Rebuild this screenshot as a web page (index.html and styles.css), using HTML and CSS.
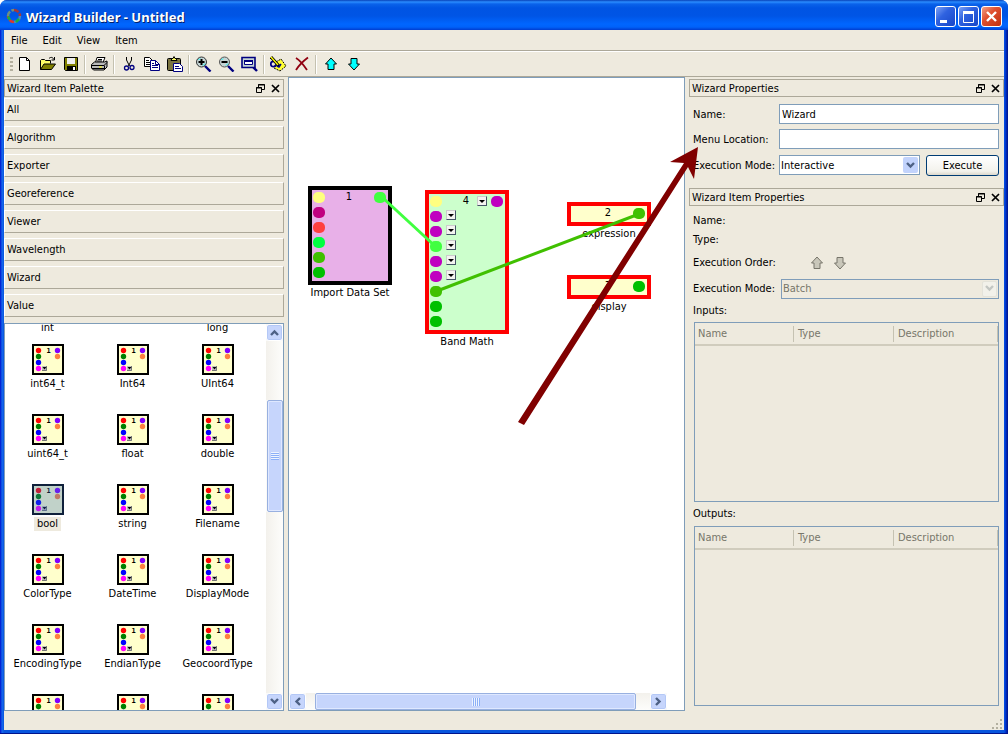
FILE: index.html
```html
<!DOCTYPE html>
<html lang="en">
<head>
<meta charset="utf-8">
<title>Wizard Builder - Untitled</title>
<link rel="stylesheet" href="styles.css">
</head>
<body>
<svg class="defs" aria-hidden="true">
  <symbol id="item" viewBox="0 0 32 31">
    <rect width="32" height="31" fill="#000"/><rect x="2" y="2" width="28" height="27" fill="#ffffcc"/>
    <circle cx="6.500" cy="6.500" r="2.700" fill="#f00"/><circle cx="6.500" cy="12.500" r="2.700" fill="#008000"/>
    <circle cx="6.500" cy="18.500" r="2.700" fill="#00f"/><circle cx="6.500" cy="24.500" r="2.700" fill="#f0f"/>
    <circle cx="25.500" cy="6.500" r="2.700" fill="#8000ff"/><circle cx="25.500" cy="12.500" r="2.700" fill="#ff8040"/>
    <rect x="10" y="22" width="5" height="5" fill="#c0c0c0"/><path d="M10 26.500h4.500V22" fill="none" stroke="#777"/><path d="M10.500 23h4l-2 2.500z"/>
    <text x="16.500" y="9" class="item-number">1</text>
  </symbol>
  <symbol id="up" viewBox="0 0 16 16"><path d="M8 2 13.500 8H11v5.500H5V8H2.500z" stroke-width="1"/></symbol>
  <symbol id="down" viewBox="0 0 16 16"><path d="M8 14 13.500 8H11V2.500H5V8H2.500z" stroke-width="1"/></symbol>
  <symbol id="float" viewBox="0 0 9 9"><path d="M2.500 3V.5h6v5H6M2 1h7M.5 3.500h5v5h-5zM0 4h6" fill="none" stroke="#000"/></symbol>
  <symbol id="close" viewBox="0 0 9 9"><path d="m1 1 7 7M8 1 1 8" fill="none" stroke="#000" stroke-width="1.700"/></symbol>
  <symbol id="chev-down" viewBox="0 0 9 7"><path d="m1 1 3.500 3.500L8 1" fill="none" stroke="currentColor" stroke-width="2.400"/></symbol>
</svg>
<div class="window">
  <header class="titlebar">
    <svg class="app-icon" width="16" height="16" viewBox="0 0 16 16" fill="none" stroke-width="2.500" stroke-dasharray="5 1.500">
      <path d="M8 2a6 6 0 0 1 6 6" stroke="#a83838"/><path d="M14 8a6 6 0 0 1-6 6" stroke="#4a88b8"/><path d="M8 14a6 6 0 0 1-6-6" stroke="#d83a30"/><path d="M2 8a6 6 0 0 1 6-6" stroke="#6d9080"/><path d="M2 8.500 4 12M10 14l3-3" stroke="#18b040"/>
    </svg>
    <h1 class="title">Wizard Builder - Untitled</h1>
    <button class="caption-button" aria-label="Minimize"><svg width="19" height="19"><path d="M4 13h7v3H4z" fill="#fff"/></svg></button>
    <button class="caption-button" aria-label="Maximize"><svg width="19" height="19"><path d="M4.500 5v10.500h10V5" fill="none" stroke="#fff"/><path d="M4 4h11v3H4z" fill="#fff"/></svg></button>
    <button class="caption-button caption-close" aria-label="Close"><svg width="19" height="19"><path d="m5 5 9 9m0-9-9 9" stroke="#fff" stroke-width="2.400"/></svg></button>
  </header>
  <nav class="menubar">
    <button class="menu">File</button><button class="menu">Edit</button><button class="menu">View</button><button class="menu">Item</button>
  </nav>
  <div class="toolbar" role="toolbar">
    <span class="grip"></span>
    <button class="tool" aria-label="New"><svg width="16" height="16"><path d="M2.500 1.500h7l3 3v10h-10z" fill="#fff" stroke="#000"/><path d="M9.500 1.500v3h3" fill="none" stroke="#000"/></svg></button>
    <button class="tool" aria-label="Open"><svg width="16" height="16"><path d="M.5 13.500v-9l1-1h3l1 1h5v3" fill="#ff6" stroke="#000"/><path d="m.5 13.500 3.500-5.500h11.500l-4 5.500z" fill="#808000" stroke="#000"/><path d="M9 2.500c2-2 4-1 5 1M14.500 1v3h-3" fill="none" stroke="#000"/></svg></button>
    <button class="tool" aria-label="Save"><svg width="16" height="16"><path d="M1.500 1.500h13v13h-12l-1-1z" fill="#808000" stroke="#000"/><path d="M4 2h8v6H4z" fill="#eee"/><path d="M4 10h9v5H4z"/><path d="M10 11h2v3h-2z" fill="#fff"/></svg></button>
    <span class="separator"></span>
    <button class="tool" aria-label="Print"><svg width="17" height="16"><path d="M4.500 6.500l1.500-5h8l-2 5" fill="#fff" stroke="#000"/><path d="M.5 8.500l3-2.500h10l2.500-1v6l-3 3H2.500l-2-2z" fill="#bbb" stroke="#000"/><path d="M1 9.500h12l3-3M1 12.500h12M13.500 14V9.500M7 3.500h4M6 5h5" fill="none" stroke="#000"/><path d="M8 11h3" stroke="#ff0"/></svg></button>
    <span class="separator"></span>
    <button class="tool" aria-label="Cut"><svg width="16" height="16" fill="none"><path d="M5.500 1v3l3 6M10.500 1v3l-3 6" stroke="#000"/><circle cx="5.500" cy="12" r="2" stroke="#000080" stroke-width="1.300"/><circle cx="11" cy="11.500" r="2" stroke="#000080" stroke-width="1.300"/></svg></button>
    <button class="tool" aria-label="Copy"><svg width="16" height="16"><path d="M.5 1.500h5l3 3v6h-8z" fill="#fff" stroke="#000"/><path d="M2 4.500h3M2 6.500h5M2 8.500h5" stroke="#000"/><path d="M6.500 4.500h5l4 4v6h-9z" fill="#fff" stroke="#000080"/><path d="M11.500 4.500v4h4M8 7.500h2M8 9.500h6M8 11.500h6" fill="none" stroke="#000080"/></svg></button>
    <button class="tool" aria-label="Paste"><svg width="16" height="16"><rect x=".5" y="2.500" width="13" height="12" rx="1" fill="#7b7440" stroke="#000"/><path d="M4 4.500h6l-1-2H8l-1-2-1 2H5z" fill="#ff6" stroke="#000"/><path d="M6.500 7.500h6l3 3v5h-9z" fill="#fff" stroke="#000080"/><path d="M8 10.500h4M8 12.500h6" stroke="#000080"/></svg></button>
    <span class="separator"></span>
    <button class="tool" aria-label="Zoom in"><svg width="17" height="16"><path d="m10 10 5.500 5.500" stroke="#000080" stroke-width="2.400"/><circle cx="6.500" cy="6" r="5" fill="#c5d4d4" stroke="#333"/><path d="M3.500 4 5 2.500M8 9.500l2-2" stroke="#0ff"/><path d="M3.500 6h6m-3-3v6" stroke="#000" stroke-width="2"/></svg></button>
    <button class="tool" aria-label="Zoom out"><svg width="17" height="16"><path d="m10 10 5.500 5.500" stroke="#000080" stroke-width="2.400"/><circle cx="6.500" cy="6" r="5" fill="#c5d4d4" stroke="#555"/><path d="M3.500 4 5 2.500M8 9.500l2-2" stroke="#0ff"/><path d="M3.500 6h6" stroke="#000" stroke-width="2"/></svg></button>
    <button class="tool" aria-label="Zoom to fit"><svg width="17" height="16"><path d="m11 10 5 5" stroke="#000080" stroke-width="2.400"/><path d="M1 1.500h13v10H1z" fill="#c5d4d4" stroke="#000080" stroke-width="1.600"/><path d="M3.500 4.500h8v4h-8z" fill="#fff" stroke="#000080"/><path d="M3 4h9v2H3z" fill="#000080"/></svg></button>
    <span class="separator"></span>
    <button class="tool" aria-label="Edit item"><svg width="17" height="16"><path d="m6 6 5-3 5 7-6 5-6-3z" fill="#ff3" stroke="#000" stroke-dasharray="2 1"/><circle cx="3.500" cy="8" r="2.700" fill="none" stroke="#000080" stroke-width="1.700"/><path d="m1 1 8 9" stroke="#000" stroke-width="3"/><path d="m1 1 7 8" stroke="#ff0" stroke-width="1.300"/><path d="m7 10 2 1 2-3" fill="none" stroke="#000080" stroke-width="1.500"/></svg></button>
    <button class="tool" aria-label="Delete"><svg width="16" height="16"><path d="M2 2c5 3 7 6 11 12M14 1.500C8 6 5 9 2 14" fill="none" stroke="#900010" stroke-width="1.800"/></svg></button>
    <span class="separator"></span>
    <button class="tool tool-arrow" aria-label="Move up"><svg width="16" height="16"><use href="#up"/></svg></button>
    <button class="tool tool-arrow" aria-label="Move down"><svg width="16" height="16"><use href="#down"/></svg></button>
  </div>

  <main class="workspace">
    <section class="palette">
      <div class="dock-title"><h2 class="dock-name">Wizard Item Palette</h2><button class="dock-button" aria-label="Float palette"><svg width="9" height="9"><use href="#float"/></svg></button><button class="dock-button" aria-label="Close palette"><svg width="9" height="9"><use href="#close"/></svg></button></div>
      <div class="categories">
        <button class="category">All</button><button class="category">Algorithm</button><button class="category">Exporter</button><button class="category">Georeference</button><button class="category">Viewer</button><button class="category">Wavelength</button><button class="category">Wizard</button><button class="category">Value</button>
      </div>
      <div class="item-list">
        <div class="item-view">
          <div class="items">
            <div class="item second-line"><svg width="32" height="31"><use href="#item"/></svg><span class="item-label">int</span></div>
            <div class="item"></div>
            <div class="item second-line"><svg width="32" height="31"><use href="#item"/></svg><span class="item-label">long</span></div>
            <div class="item"><svg width="32" height="31"><use href="#item"/></svg><span class="item-label">int64_t</span></div>
            <div class="item"><svg width="32" height="31"><use href="#item"/></svg><span class="item-label">Int64</span></div>
            <div class="item"><svg width="32" height="31"><use href="#item"/></svg><span class="item-label">UInt64</span></div>
            <div class="item"><svg width="32" height="31"><use href="#item"/></svg><span class="item-label">uint64_t</span></div>
            <div class="item"><svg width="32" height="31"><use href="#item"/></svg><span class="item-label">float</span></div>
            <div class="item"><svg width="32" height="31"><use href="#item"/></svg><span class="item-label">double</span></div>
            <div class="item selected"><span class="tint"><svg width="32" height="31"><use href="#item"/></svg></span><span class="item-label">bool</span></div>
            <div class="item"><svg width="32" height="31"><use href="#item"/></svg><span class="item-label">string</span></div>
            <div class="item"><svg width="32" height="31"><use href="#item"/></svg><span class="item-label">Filename</span></div>
            <div class="item"><svg width="32" height="31"><use href="#item"/></svg><span class="item-label">ColorType</span></div>
            <div class="item"><svg width="32" height="31"><use href="#item"/></svg><span class="item-label">DateTime</span></div>
            <div class="item"><svg width="32" height="31"><use href="#item"/></svg><span class="item-label">DisplayMode</span></div>
            <div class="item"><svg width="32" height="31"><use href="#item"/></svg><span class="item-label">EncodingType</span></div>
            <div class="item"><svg width="32" height="31"><use href="#item"/></svg><span class="item-label">EndianType</span></div>
            <div class="item"><svg width="32" height="31"><use href="#item"/></svg><span class="item-label">GeocoordType</span></div>
            <div class="item"><svg width="32" height="31"><use href="#item"/></svg></div>
            <div class="item"><svg width="32" height="31"><use href="#item"/></svg></div>
            <div class="item"><svg width="32" height="31"><use href="#item"/></svg></div>
          </div>
        </div>
        <div class="scrollbar vertical">
          <button class="scroll-button" aria-label="Scroll up"><svg class="flip" width="9" height="7"><use href="#chev-down"/></svg></button>
          <div class="track track-before"></div>
          <div class="thumb"><span class="ridges"></span></div>
          <div class="track track-after"></div>
          <button class="scroll-button" aria-label="Scroll down"><svg width="9" height="7"><use href="#chev-down"/></svg></button>
        </div>
      </div>
    </section>

    <section class="canvas">
      <div class="canvas-view">
        <div class="node import"><span class="node-number">1</span>
          <div class="ports"><i class="port c-yellow"></i><i class="port c-plum"></i><i class="port c-red"></i><i class="port c-mint"></i><i class="port c-olive"></i><i class="port c-green"></i></div>
          <div class="ports"><i class="port c-lime"></i></div>
          <span class="node-label">Import Data Set</span>
        </div>
        <div class="node band"><span class="node-number">4</span>
          <div class="ports"><i class="port c-yellow"></i><i class="port c-purple"></i><i class="port c-purple"></i><i class="port c-lime"></i><i class="port c-purple"></i><i class="port c-purple"></i><i class="port c-olive"></i><i class="port c-green"></i><i class="port c-green"></i></div>
          <div class="drops"><button class="drop" aria-label="Input 2"></button><button class="drop" aria-label="Input 3"></button><button class="drop" aria-label="Input 4"></button><button class="drop" aria-label="Input 5"></button><button class="drop" aria-label="Input 6"></button></div>
          <div class="outputs"><button class="drop" aria-label="Output 1"></button><i class="port c-purple"></i></div>
          <span class="node-label">Band Math</span>
        </div>
        <div class="node value expression"><span class="node-number">2</span><div class="ports"></div><div class="ports"><i class="port c-olive"></i></div><span class="node-label">expression</span></div>
        <div class="node value display"><span class="node-number">3</span><div class="ports"></div><div class="ports"><i class="port c-green"></i></div><span class="node-label">display</span></div>
        <svg class="links" width="396" height="610"><path d="m94 120 53 49" stroke="#40ff40"/><path d="m148 213 202-77" stroke="#40c000"/></svg>
      </div>
      <div class="scrollbar horizontal">
        <button class="scroll-button" aria-label="Scroll left"><svg class="turn-left" width="9" height="7"><use href="#chev-down"/></svg></button>
        <div class="track track-before"></div>
        <div class="thumb"><span class="ridges"></span></div>
        <div class="track track-after"></div>
        <button class="scroll-button" aria-label="Scroll right"><svg class="turn-right" width="9" height="7"><use href="#chev-down"/></svg></button>
      </div>
    </section>

    <aside class="properties">
      <section class="panel">
        <div class="dock-title"><h2 class="dock-name">Wizard Properties</h2><button class="dock-button" aria-label="Float wizard properties"><svg width="9" height="9"><use href="#float"/></svg></button><button class="dock-button" aria-label="Close wizard properties"><svg width="9" height="9"><use href="#close"/></svg></button></div>
        <form class="wizard-form">
          <label for="name">Name:</label><input class="field" id="name" value="Wizard">
          <label for="location">Menu Location:</label><input class="field" id="location">
          <label for="mode">Execution Mode:</label>
          <div class="mode-row">
            <span class="select"><select id="mode"><option>Interactive</option></select><span class="select-arrow"><svg width="9" height="7"><use href="#chev-down"/></svg></span></span>
            <button class="execute" type="button">Execute</button>
          </div>
        </form>
      </section>
      <section class="panel item-panel">
        <div class="dock-title"><h2 class="dock-name">Wizard Item Properties</h2><button class="dock-button" aria-label="Float item properties"><svg width="9" height="9"><use href="#float"/></svg></button><button class="dock-button" aria-label="Close item properties"><svg width="9" height="9"><use href="#close"/></svg></button></div>
        <div class="item-body">
          <div class="line">Name:</div>
          <div class="line">Type:</div>
          <div class="line order"><span>Execution Order:</span><span class="order-buttons"><button class="tool disabled" disabled aria-label="Earlier"><svg width="16" height="16"><use href="#up"/></svg></button><button class="tool disabled" disabled aria-label="Later"><svg width="16" height="16"><use href="#down"/></svg></button></span></div>
          <div class="line mode"><label for="item-mode">Execution Mode:</label><span class="select select-off"><select id="item-mode" disabled><option>Batch</option></select><span class="select-arrow"><svg width="9" height="7"><use href="#chev-down"/></svg></span></span></div>
          <div class="caption" id="inputs">Inputs:</div>
          <div class="grid"><table aria-labelledby="inputs"><thead><tr><th>Name</th><th>Type</th><th>Description</th></tr></thead></table></div>
          <div class="caption caption-outputs" id="outputs">Outputs:</div>
          <div class="grid"><table aria-labelledby="outputs"><thead><tr><th>Name</th><th>Type</th><th>Description</th></tr></thead></table></div>
        </div>
      </section>
    </aside>
    <svg class="pointer" width="190" height="290" viewBox="0 0 190 290"><path d="m182 4-4 32-6-12L8 282l-6-3L168 20l-14-1z" fill="#800000"/></svg>
  </main>
  <footer class="statusbar"><svg width="11" height="11"><path d="M9 1h2v2H9zM5 5h2v2H5zM9 5h2v2H9zM1 9h2v2H1zM5 9h2v2H5zM9 9h2v2H9z" fill="#b3b0a0"/></svg></footer>
</div>
</body>
</html>
```
FILE: styles.css
```css
* { box-sizing: border-box; }
body {
  margin: 0;
  background: #fff;
  color: #000;
  font: 11px/14px "DejaVu Sans Condensed", "Noto Sans", sans-serif;
}
button, input, select { font: inherit; color: inherit; margin: 0; padding: 0; }
button { border: 0; background: none; }
h1, h2 { margin: 0; font: inherit; }
.defs { display: none; }
.item-number { font: bold 7px "DejaVu Sans Mono", monospace; text-anchor: middle; }

.window {
  display: flex;
  flex-direction: column;
  height: 100vh;
  padding: 0 4px 3px;
  background: linear-gradient(90deg, #0019cf, #0831d9 1px, #166aee 2px, #0855dd 4px, #0855dd calc(100% - 4px), #0040e0 calc(100% - 3px), #001ea0 calc(100% - 1px), #00138c);
  border-bottom: 1px solid #00138c;
  border-radius: 7px 7px 0 0;
}
.titlebar {
  display: flex;
  align-items: center;
  gap: 2px;
  height: 30px;
  margin: 0 -4px;
  padding: 2px 6px 0;
  border-radius: 7px 7px 0 0;
  background: linear-gradient(#0842b8 0, #2a8cff 2px, #0a62ea 4px, #0054e3 8px, #0055e5 16px, #0066ff 24px, #0062fa 27px, #003dd0 30px);
}
.title {
  flex: 1;
  padding: 2px 0 0 2px;
  color: #fff;
  font: bold 13px/18px "Noto Sans", sans-serif;
  text-shadow: 1px 1px 0 #00206a;
}
.caption-button {
  display: grid;
  width: 21px;
  height: 21px;
  border: 1px solid #fff;
  border-radius: 3px;
  background: linear-gradient(135deg, #7da2f5, #2f62e0 40%, #1746c8);
}
.caption-close { background: linear-gradient(135deg, #f0a088, #e05030 40%, #c03010); }

.menubar { display: flex; gap: 1px; height: 21px; background: #eeeade; border-bottom: 1px solid #aca899; }
.menu { padding: 2px 7px 0; height: 20px; }
.toolbar { display: flex; align-items: center; height: 26px; padding-left: 6px; background: #eeeade; border-top: 1px solid #fff; border-bottom: 1px solid #aca899; }
.grip { width: 3px; height: 15px; background: repeating-linear-gradient(#b4b09f 0 2px, transparent 2px 4px); }
.tool { display: grid; place-items: center; width: 23px; height: 22px; }
.separator { width: 2px; height: 19px; margin: 0 2px; background: #c4c1b0; border-right: 1px solid #fff; }
.tool-arrow { fill: #0ff; stroke: #000; }
.disabled { fill: #c9c7ba; stroke: #77756a; }

.workspace { position: relative; flex: 1; min-height: 0; display: flex; gap: 4px; background: #eeeade; }
.palette { display: flex; flex-direction: column; width: 280px; min-height: 0; padding-top: 2px; }
.dock-title { display: flex; align-items: center; gap: 6px; height: 18px; padding: 0 3px 0 2px; border: 1px solid #aca899; }
.dock-name { flex: 1; padding-top: 2px; }
.dock-button { display: grid; width: 9px; height: 9px; }
.categories { display: flex; flex-direction: column; gap: 5px; padding: 1px 0 6px; }
.category { height: 23px; padding: 1px 0 0 2px; text-align: left; border: 1px solid #aca899; border-color: #fff #aca899 #aca899 #fff; }
.item-list { flex: 1; display: flex; min-height: 0; border: 1px solid #7f9db9; background: #fff; }
.item-view { flex: 1; overflow: hidden; }
.items { display: grid; grid-template-columns: repeat(3, 85px); grid-auto-rows: 70px; margin-top: -50px; }
.item { display: flex; flex-direction: column; align-items: center; gap: 2px; }
.second-line { gap: 16px; }
.item-label { padding: 0 3px; }
.selected .item-label { background: #eeeade; }
.tint { position: relative; height: 31px; }
.tint::after { content: ""; position: absolute; inset: 0; background: #316ac5; opacity: .3; }

.scrollbar { display: flex; background: #fbfaf7; color: #4d6185; }
.vertical { flex-direction: column; width: 17px; }
.scroll-button { display: grid; place-items: center; flex: 0 0 17px; border: 1px solid #fff; border-radius: 3px; background: #c6d5fc; box-shadow: inset 0 0 0 1px #b4c8f6; }
.vertical .scroll-button { height: 17px; }
.flip { transform: rotate(180deg); }
.turn-left { transform: rotate(90deg); }
.turn-right { transform: rotate(-90deg); }
.track { background: linear-gradient(90deg, #f3f1ec, #fdfdfb); }
.vertical .track-before { flex: 59; }
.vertical .track-after { flex: 182; }
.thumb { display: grid; place-items: center; border: 1px solid #98b0e0; border-radius: 2px; background: #c6d5fc; box-shadow: inset 0 0 0 1px #dfe8ff; }
.vertical .thumb { flex: 111; margin-left: 1px; }
.ridges { width: 8px; height: 8px; background: repeating-linear-gradient(#eef4fe 0 1px, #8cb0f8 1px 2px); }
.horizontal .ridges { background: repeating-linear-gradient(90deg, #eef4fe 0 1px, #8cb0f8 1px 2px); }
.horizontal { height: 17px; margin-right: 17px; }
.horizontal .track { background: linear-gradient(#f3f1ec, #fdfdfb); }
.horizontal .track-before { flex: 9; }
.horizontal .track-after { flex: 14; }
.horizontal .thumb { flex: 322; }

.canvas { flex: 1; display: flex; flex-direction: column; border: 1px solid #7f9db9; background: #fff; }
.canvas-view { position: relative; flex: 1; }
.node { position: absolute; width: 84px; border: 4px solid #f00; display: flex; justify-content: space-between; padding: 2px 2px 2px 1px; }
.import { left: 19px; top: 108px; height: 99px; border-color: #000; background: #e8b0e8; }
.band { left: 136px; top: 112px; height: 144px; background: #ccffcc; }
.value { left: 278px; height: 24px; background: #ffffcc; }
.expression { top: 124px; }
.display { top: 197px; }
.node-number { position: absolute; left: 0; right: 2px; top: 0; text-align: center; }
.node-label { position: absolute; left: -20px; right: -20px; top: calc(100% + 5px); text-align: center; }
.ports { display: flex; flex-direction: column; gap: 4px; }
.port { width: 12px; height: 11px; border-radius: 5px; }
.drops { flex: 1; display: flex; flex-direction: column; gap: 5px; padding: 14px 4px 0; }
.outputs { display: flex; gap: 4px; }
.drop { display: grid; place-items: center; width: 10px; height: 10px; background: #f4f4f0; border: 1px solid #777; border-color: #ccc #456 #456 #ccc; }
.drop::after { content: ""; border: 3px solid transparent; border-top-color: #000; border-bottom: 0; }
.c-yellow { background: #ffff80; }
.c-plum { background: #c00080; }
.c-red { background: #ff4040; }
.c-mint { background: #00ff40; }
.c-olive { background: #40c000; }
.c-green { background: #00c000; }
.c-lime { background: #40ff40; }
.c-purple { background: #c000c0; }
.links { position: absolute; inset: 0; stroke-width: 3; pointer-events: none; }
.pointer { position: absolute; left: 512px; top: 66px; pointer-events: none; }

.properties { display: flex; flex-direction: column; gap: 12px; width: 315px; padding-top: 2px; }
.wizard-form { display: grid; grid-template-columns: 81px 1fr; gap: 5px; align-items: center; padding: 7px 5px 0 4px; }
label { padding-top: 1px; white-space: nowrap; }
.field { width: 100%; min-width: 0; height: 20px; padding: 0 2px; border: 1px solid #7f9db9; border-radius: 0; background: #fff; }
.mode-row { display: flex; gap: 6px; padding-top: 1px; }
.select { position: relative; flex: 1; display: flex; height: 20px; border: 1px solid #7f9db9; background: #fff; }
.select select { flex: 1; min-width: 0; padding: 1px 1px 0; border: 0; border-radius: 0; background: none; appearance: none; opacity: 1; }
.select-arrow { position: absolute; top: 1px; right: 1px; display: grid; place-items: center; width: 15px; height: 16px; border-radius: 2px; background: #c2d3fc; color: #4d6185; pointer-events: none; }
.select-off { background: none; color: #77766a; }
.select-off .select-arrow { background: #f2f1ea; color: #c3c6c2; border: 1px solid #e4e3da; }
.execute { width: 73px; height: 21px; padding-top: 1px; border: 1px solid #003c74; border-radius: 3px; background: linear-gradient(#fff, #f3f2ec 80%, #dcd8cc); }
.item-panel { flex: 1; display: flex; flex-direction: column; }
.item-body { flex: 1; display: flex; flex-direction: column; padding: 5px 5px 5px 4px; }
.line { display: flex; align-items: center; height: 19px; }
.order { height: 27px; }
.order-buttons { display: flex; margin-left: 30px; }
.mode { height: 25px; gap: 6px; }
.caption { height: 21px; line-height: 20px; }
.caption-outputs { height: 24px; line-height: 24px; }
.grid { flex: 1; margin-left: 1px; border: 1px solid #7f9db9; }
table { width: 100%; table-layout: fixed; border-collapse: separate; border-spacing: 0; color: #77766a; border-bottom: 2px solid #d0ccbd; }
th { height: 21px; padding: 1px 4px 0; font-weight: normal; text-align: left; background: linear-gradient(#c5c2b2, #c5c2b2) right center / 1px 16px no-repeat; }
th:nth-child(1) { width: 99px; padding-left: 3px; }
th:nth-child(2) { width: 100px; }

.statusbar { display: flex; justify-content: flex-end; align-items: flex-end; height: 19px; padding: 0 2px 1px; background: #eeeade; }
```
